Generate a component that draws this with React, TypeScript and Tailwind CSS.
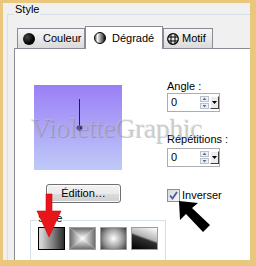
import React from "react";

function SpinArrow({ up }: { up?: boolean }) {
  return (
    <svg width="9" height="6" className="block">
      <rect x="0.5" y="0.5" width="8" height="5" fill="#eef1f6" stroke="#b9c1cf" />
      {up ? (
        <path d="M2.5 4 L6.5 4 L4.5 1.5 Z" fill="#5d6f97" />
      ) : (
        <path d="M2.5 2 L6.5 2 L4.5 4.5 Z" fill="#5d6f97" />
      )}
    </svg>
  );
}

function Spin({ h }: { h: string }) {
  return (
    <div className={`flex ${h} w-[53px] items-center border border-[#abadb3] bg-white`}>
      <span className="flex-1 pl-[3px]">0</span>
      <div className="flex flex-col gap-[1px]">
        <SpinArrow up />
        <SpinArrow />
      </div>
      <div className="ml-[1px] flex h-[13px] w-[9px] items-center justify-center border border-t-white border-l-white border-r-[#404040] border-b-[#404040] bg-[#ececec]">
        <svg width="5" height="3" className="block">
          <path d="M0 0 H5 L2.5 3 Z" fill="#000" />
        </svg>
      </div>
    </div>
  );
}

function RectSwatch() {
  return (
    <svg width="25" height="21" className="block">
      <defs>
        <linearGradient id="rt" gradientUnits="userSpaceOnUse" x1="0" y1="0" x2="0" y2="10.5">
          <stop offset="0" stopColor="#6e6e6e" />
          <stop offset="1" stopColor="#ffffff" />
        </linearGradient>
        <linearGradient id="rb" gradientUnits="userSpaceOnUse" x1="0" y1="21" x2="0" y2="10.5">
          <stop offset="0" stopColor="#6e6e6e" />
          <stop offset="1" stopColor="#ffffff" />
        </linearGradient>
        <linearGradient id="rl" gradientUnits="userSpaceOnUse" x1="0" y1="0" x2="12.5" y2="0">
          <stop offset="0" stopColor="#6e6e6e" />
          <stop offset="1" stopColor="#ffffff" />
        </linearGradient>
        <linearGradient id="rr" gradientUnits="userSpaceOnUse" x1="25" y1="0" x2="12.5" y2="0">
          <stop offset="0" stopColor="#6e6e6e" />
          <stop offset="1" stopColor="#ffffff" />
        </linearGradient>
      </defs>
      <polygon points="0,0 25,0 12.5,10.5" fill="url(#rt)" />
      <polygon points="0,21 25,21 12.5,10.5" fill="url(#rb)" />
      <polygon points="0,0 0,21 12.5,10.5" fill="url(#rl)" />
      <polygon points="25,0 25,21 12.5,10.5" fill="url(#rr)" />
    </svg>
  );
}

export default function App() {
  return (
    <div className="relative h-[266px] w-[256px] overflow-hidden bg-[#e9c87d] pb-[6px] pl-[3px] pr-[6px] pt-[3px] font-['Liberation_Sans',Arial,sans-serif] text-[11px] leading-[13px] text-black">
      <div className="relative h-full w-full overflow-hidden bg-[#f0f0f0]">
        {/* outer group box */}
        <div className="relative ml-[4px] mt-[11px] h-[300px] w-[300px] border-l border-t border-[#d5dfe5]">
          <span className="absolute -top-[12px] left-[6px] bg-[#f0f0f0] px-[1px]">Style</span>

          {/* tabs */}
          <div className="ml-[9px] mt-[11px] flex h-[22px] items-end">
            <div className="flex h-[20px] w-[68px] items-center border border-b-0 border-[#898c95] bg-[linear-gradient(to_bottom,#f6f6f6,#e9e9e9_50%,#dadada)] pl-[5px]">
              <span className="block h-[12px] w-[12px] rounded-full bg-[radial-gradient(circle_at_35%_35%,#444,#000_60%)]" />
              <span className="ml-[8px]">Couleur</span>
            </div>
            <div className="relative z-10 -mb-[1px] flex h-[23px] w-[78px] items-center border border-b-0 border-[#898c95] bg-white pl-[8px]">
              <span className="block h-[12px] w-[12px] rounded-full border border-black bg-[linear-gradient(to_right,#6a6a6a_0%,#f4f4f4_25%,#9a9a9a_55%,#111_100%)]" />
              <span className="ml-[6px]">Dégradé</span>
            </div>
            <div className="flex h-[20px] w-[50px] items-center border border-b-0 border-[#898c95] bg-[linear-gradient(to_bottom,#f6f6f6,#e9e9e9_50%,#dadada)] pl-[3px]">
              <svg width="12" height="12" className="block">
                <defs>
                  <clipPath id="globe">
                    <circle cx="6" cy="6" r="5.5" />
                  </clipPath>
                </defs>
                <g clipPath="url(#globe)" stroke="#000" strokeWidth="1">
                  <line x1="4" y1="0" x2="4" y2="12" />
                  <line x1="8" y1="0" x2="8" y2="12" />
                  <line x1="0" y1="4" x2="12" y2="4" />
                  <line x1="0" y1="8" x2="12" y2="8" />
                </g>
                <circle cx="6" cy="6" r="5.3" fill="none" stroke="#000" strokeWidth="1.2" />
              </svg>
              <span className="ml-[3px]">Motif</span>
            </div>
          </div>

          {/* panel */}
          <div className="ml-[6px] flex h-[230px] w-[250px] border border-[#898c95] bg-white">
            {/* left column */}
            <div className="flex w-[152px] shrink-0 flex-col items-start">
              <div className="ml-[19px] mt-[36px] h-[85px] w-[88px] bg-[linear-gradient(to_bottom,#9a7ff6,#bfcaf8)]">
                <svg width="88" height="85" className="block">
                  <line x1="45.5" y1="14" x2="45.5" y2="41" stroke="#1b1b6b" strokeWidth="1" />
                  <g stroke="#14145e" strokeWidth="1.4">
                    <line x1="42.5" y1="43" x2="48.5" y2="43" />
                    <line x1="45.5" y1="40" x2="45.5" y2="46" />
                    <line x1="43.5" y1="41" x2="47.5" y2="45" />
                    <line x1="47.5" y1="41" x2="43.5" y2="45" />
                  </g>
                </svg>
              </div>
              <div className="ml-[31px] mt-[14px] flex h-[20px] w-[75px] items-center justify-center rounded-[3px] border border-[#707070] bg-[linear-gradient(to_bottom,#f2f2f2_0%,#ebebeb_50%,#dddddd_51%,#cfcfcf_100%)] shadow-[inset_0_0_0_1px_#fbfbfb]">
                Édition…
              </div>
              <div className="relative ml-[15px] mt-[17px] h-[60px] w-[136px] border border-[#d5dfe5]">
                <span className="absolute -top-[9px] left-[6px] bg-white px-[1px]">Style</span>
                <div className="ml-[7px] mt-[6px] flex gap-[4px]">
                  <div className="h-[23px] w-[27px] border border-black bg-[linear-gradient(to_right,#d4d4d4_10%,#2c2c2c)]" />
                  <div className="h-[23px] w-[27px] border border-[#9d9d9d]">
                    <RectSwatch />
                  </div>
                  <div className="h-[23px] w-[27px] border border-[#9d9d9d] bg-[radial-gradient(circle_at_center,#ffffff_0%,#a0a0a0_55%,#3c3c3c_100%)]" />
                  <div className="h-[23px] w-[27px] border border-[#9d9d9d] bg-[linear-gradient(200deg,#ffffff_0%,#b4b4b4_45%,#303030_53%,#000000_100%)]" />
                </div>
              </div>
            </div>

            {/* right column */}
            <div className="flex flex-col items-start">
              <span className="mt-[31px]">Angle :</span>
              <Spin h="h-[19px]" />
              <span className="mt-[21px]">Répétitions :</span>
              <div className="mt-[2px]">
                <Spin h="h-[19px]" />
              </div>
              <div className="mt-[22px] flex items-center">
                <div className="flex h-[13px] w-[13px] items-center justify-center border border-[#8e8f8f] bg-[linear-gradient(135deg,#d6d9e0,#f7f7f9)]">
                  <svg width="11" height="11" className="block">
                    <path d="M2 5.5 L4.5 8.5 L9 2" stroke="#4b5e95" strokeWidth="1.8" fill="none" />
                  </svg>
                </div>
                <span className="ml-[2px]">Inverser</span>
              </div>
            </div>
          </div>
        </div>
      </div>

      {/* watermark */}
      <span className="pointer-events-none absolute left-[30px] top-[114px] whitespace-nowrap font-['Liberation_Serif',serif] text-[28px] leading-[28px] tracking-[-0.5px] text-[rgba(200,200,200,0.35)] [text-shadow:1px_1px_0_rgba(110,110,110,0.35)]">
        VioletteGraphic
      </span>

      {/* red arrow */}
      <svg width="27" height="48" className="pointer-events-none absolute left-[36px] top-[192px]">
        <polygon points="10,2 16,2 16,19 25,19 13,45 1,19 10,19" fill="#e8161b" stroke="#c40d10" strokeWidth="0.6" />
      </svg>

      {/* black cursor arrow */}
      <svg width="40" height="40" className="pointer-events-none absolute left-[176px] top-[198px]">
        <polygon points="3,3 4,22 10,16 27,34 34,27 16,10 22,5" fill="#000" />
      </svg>
    </div>
  );
}
